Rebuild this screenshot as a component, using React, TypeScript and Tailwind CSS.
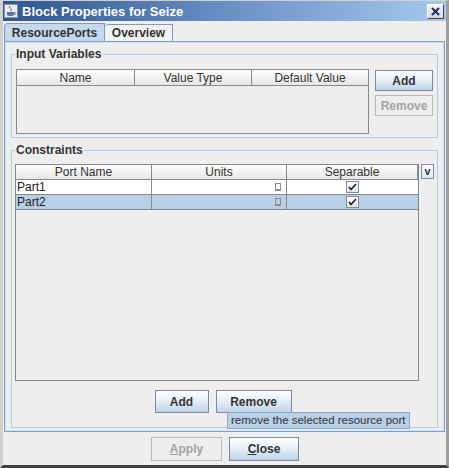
import React from 'react';

const font = { fontFamily: '"Liberation Sans", Arial, sans-serif' };

function Btn({ label, disabled, w, h, u }: { label: string; disabled?: boolean; w: string; h: string; u?: boolean }) {
  return (
    <div
      className={`${w} ${h} flex items-center justify-center border text-[12px] font-bold ${
        disabled
          ? 'border-[#b8b8b8] text-[#a3a3a3] bg-[#eeeeee]'
          : 'border-[#7a8a99] text-[#333333] bg-gradient-to-b from-[#ffffff] via-[#e4edf6] to-[#bfd3e8]'
      }`}
    >
      {u ? (
        <span>
          <span className="underline">{label[0]}</span>
          {label.slice(1)}
        </span>
      ) : (
        label
      )}
    </div>
  );
}

function Group({ title, className, children }: { title: string; className: string; children: React.ReactNode }) {
  return (
    <div className={`relative border border-[#b9c9dc] ${className}`}>
      <div className="absolute -top-[9px] left-[3px] bg-[#eeeeee] px-[1px] text-[12px] font-bold text-[#333333] leading-[16px]">
        {title}
      </div>
      {children}
    </div>
  );
}

function Head({ label, w, last }: { label: string; w: string; last?: boolean }) {
  return (
    <div
      className={`${w} h-full flex items-center justify-center text-[12px] text-[#333333] bg-gradient-to-b from-[#ffffff] to-[#e6e6e6] ${
        last ? '' : 'border-r border-[#8a8a8a]'
      }`}
    >
      {label}
    </div>
  );
}

function Check() {
  return (
    <div className="w-[13px] h-[12px] border border-[#7f8d9c] bg-gradient-to-b from-[#ffffff] to-[#dfe6ee] flex items-center justify-center">
      <svg width="9" height="8" viewBox="0 0 9 8">
        <path d="M1 4 L3 6.5 L8 1" stroke="#1e1e1e" strokeWidth="1.6" fill="none" />
      </svg>
    </div>
  );
}

function Row({ name, sel }: { name: string; sel?: boolean }) {
  const bg = sel ? 'bg-[#b8cfe5]' : 'bg-white';
  return (
    <div className={`flex h-[15px] ${bg} border-b border-[#8a8a8a] text-[12px] text-[#222222]`}>
      <div className="w-[136px] border-r border-[#8a8a8a] pl-[1px] leading-[14px]">{name}</div>
      <div className="w-[135px] border-r border-[#8a8a8a] flex items-center justify-end pr-[5px]">
        <div className="w-[6px] h-[8px] border border-[#8a8a8a] border-b-[2px]" />
      </div>
      <div className="flex-1 flex items-center justify-center">
        <Check />
      </div>
    </div>
  );
}

export default function App() {
  return (
    <div
      className="w-[449px] h-[468px] bg-[#eeeeee] flex flex-col border-l-[3px] border-l-[#d4d0c8] border-r-[3px] border-r-[#a09d96] border-b-[3px] border-b-[#404040] border-t border-t-[#d4d0c8]"
      style={font}
    >
      {/* title bar */}
      <div className="h-[20px] flex items-center bg-gradient-to-r from-[#2f5592] via-[#6a8fc4] to-[#a6c9ee] pr-[2px]">
        <div className="w-[14px] h-[14px] ml-[1px] bg-[#e8ecf2] border border-[#8896b0] flex items-center justify-center">
          <svg width="12" height="12" viewBox="0 0 12 12">
            <path d="M5 1 Q4 2.5 5.5 3.5 Q7 4.5 6 6" stroke="#c03030" strokeWidth="1" fill="none" />
            <path d="M2 7 H9 V9 Q9 11 7 11 H4 Q2 11 2 9 Z" fill="#5a6fa0" />
            <path d="M9 7.5 Q11 7.5 11 8.5 Q11 9.5 9 9.5" stroke="#5a6fa0" strokeWidth="1" fill="none" />
          </svg>
        </div>
        <div className="ml-[4px] text-[13px] font-bold text-white leading-none">Block Properties for Seize</div>
        <div className="ml-auto w-[17px] h-[15px] bg-gradient-to-b from-[#f4f4f4] to-[#d6d6d6] border border-t-white border-l-white border-r-[#404040] border-b-[#404040] flex items-center justify-center">
          <svg width="9" height="9" viewBox="0 0 9 9">
            <path d="M1 1 L8 8 M8 1 L1 8" stroke="#1c2a6e" strokeWidth="2" />
          </svg>
        </div>
      </div>

      {/* tabs */}
      <div className="flex items-end h-[20px] px-[1px]">
        <div className="h-[18px] w-[101px] flex items-center justify-center border border-[#7a9ac9] border-b-0 bg-[#c4d9ee] text-[12px] font-bold text-[#333333] rounded-tl-[4px]">
          ResourcePorts
        </div>
        <div className="h-[17px] w-[68px] flex items-center justify-center border border-[#7a9ac9] border-b-0 border-l-0 bg-[#f2f2f2] text-[12px] font-bold text-[#333333] rounded-tl-[4px]">
          Overview
        </div>
      </div>

      {/* tab panel */}
      <div className="mx-[1px] h-[391px] border border-[#7d9fcf] shadow-[inset_0_0_0_1px_#cfe0f3] flex flex-col px-[6px] pt-[12px]">
        <Group title="Input Variables" className="h-[84px] flex gap-[6px] px-[4px] pt-[14px]">
          <div className="w-[356px] h-[65px] border border-[#7f8a95] flex flex-col">
            <div className="h-[16px] flex border-b border-[#8a8a8a]">
              <Head label="Name" w="w-[118px]" />
              <Head label="Value Type" w="w-[117px]" />
              <Head label="Default Value" w="flex-1" last />
            </div>
          </div>
          <div className="flex flex-col gap-[4px] pt-[1px]">
            <Btn label="Add" w="w-[58px]" h="h-[21px]" />
            <Btn label="Remove" w="w-[58px]" h="h-[21px]" disabled />
          </div>
        </Group>

        <Group title="Constraints" className="mt-[12px] h-[278px] flex flex-col px-[3px] pt-[13px]">
          <div className="flex gap-[2px]">
            <div className="w-[407px] h-[217px] border border-[#7f8a95] flex flex-col bg-[#eeeeee]">
              <div className="h-[15px] flex border-b border-[#8a8a8a]">
                <Head label="Port Name" w="w-[136px]" />
                <Head label="Units" w="w-[135px]" />
                <Head label="Separable" w="flex-1" />
              </div>
              <Row name="Part1" />
              <Row name="Part2" sel />
            </div>
            <div className="w-[13px] h-[15px] border border-[#7f8d9c] bg-gradient-to-b from-[#ffffff] to-[#dfe6ee] flex items-center justify-center text-[11px] font-bold text-[#333366]">
              v
            </div>
          </div>
          <div className="relative flex justify-center gap-[7px] mt-[9px] pr-[3px]">
            <Btn label="Add" w="w-[54px]" h="h-[23px]" />
            <Btn label="Remove" w="w-[76px]" h="h-[23px]" />
            <div className="absolute left-[212px] top-[22px] h-[17px] px-[3px] bg-[#b8cfe5] border border-[#8aa6c8] text-[11.5px] text-[#333333] leading-[15px] whitespace-nowrap">
              remove the selected resource port
            </div>
          </div>
        </Group>
      </div>

      {/* bottom buttons */}
      <div className="flex justify-center gap-[7px] mt-[5px] pl-[1px]">
        <Btn label="Apply" w="w-[71px]" h="h-[24px]" disabled u />
        <Btn label="Close" w="w-[70px]" h="h-[24px]" u />
      </div>
    </div>
  );
}
